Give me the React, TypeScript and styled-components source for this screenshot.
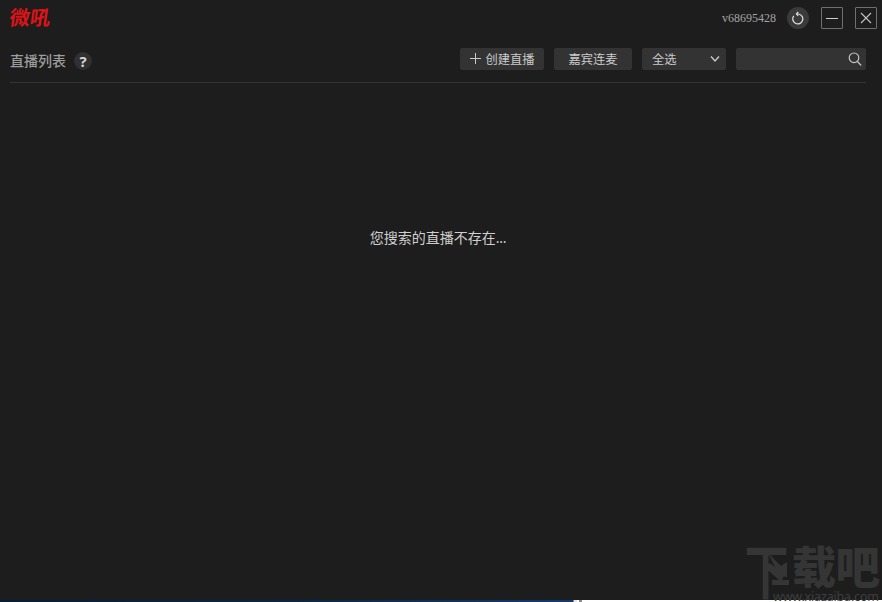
import React from 'react';
import styled, { createGlobalStyle } from 'styled-components';

const GlobalStyle = createGlobalStyle`
  * { box-sizing: border-box; }
  body { margin: 0; background: #1d1d1d; overflow: hidden; }
`;

const Window = styled.div`
  position: relative;
  display: flex;
  flex-direction: column;
  width: 882px;
  height: 602px;
  overflow: hidden;
  background: #1d1d1d;
  color: #c8c8c8;
  font-family: 'Noto Sans CJK SC', sans-serif;
`;

const TitleBar = styled.header`
  display: flex;
  align-items: center;
  justify-content: space-between;
  height: 36px;
  padding: 0 5px 0 10px;
`;

const Brand = styled.svg`
  display: block;
  width: 42px;
  height: 24px;
  overflow: visible;
`;

const WindowTools = styled.div`
  display: flex;
  align-items: center;
`;

const Version = styled.span`
  margin-right: 11px;
  font: 12px/16px 'Liberation Serif', serif;
  color: #a4a4a4;
`;

const RefreshButton = styled.button`
  display: grid;
  place-items: center;
  width: 22px;
  height: 22px;
  margin-right: 12px;
  padding: 0;
  border: 0;
  border-radius: 50%;
  background: #3a3a3a;
`;

const FrameButton = styled.button`
  display: grid;
  place-items: center;
  width: 22px;
  height: 22px;
  padding: 0;
  border: 1px solid #6f6f6f;
  border-radius: 1px;
  background: transparent;
  & + & { margin-left: 12px; }
`;

const Toolbar = styled.div`
  display: flex;
  justify-content: space-between;
  height: 47px;
  margin: 0 16px 0 10px;
  padding-top: 12px;
  border-bottom: 1px solid #343434;
`;

const Heading = styled.div`
  display: flex;
  align-items: center;
  gap: 8px;
  height: 25px;
  font-size: 14px;
  font-weight: 500;
  color: #9c9c9c;
`;

const HeadingText = styled.span`
  height: 24px;
  line-height: 22px;
`;

const Help = styled.span`
  width: 18px;
  height: 18px;
  border-radius: 50%;
  background: #303030;
  color: #d4d4d4;
  font: bold 15px/18px 'Noto Sans', sans-serif;
  text-align: center;
`;

const Actions = styled.div`
  display: flex;
  gap: 10px;
`;

const Control = styled.button<{ $width: number; $align?: string }>`
  display: flex;
  align-items: center;
  justify-content: ${p => p.$align ?? 'center'};
  width: ${p => p.$width}px;
  height: 22px;
  padding: 0 ${p => (p.$align ? 5 : 9)}px 0 ${p => (p.$align ? 10 : 9)}px;
  border: 0;
  border-radius: 2px;
  background: #333;
  color: #cbcbcb;
  font: 12.25px/22px 'Noto Sans CJK SC', sans-serif;
  white-space: nowrap;
`;

const PlusIcon = styled.svg`
  margin: 0 4px 1px -1px;
`;

const SearchBox = styled.div`
  display: flex;
  align-items: center;
  justify-content: flex-end;
  width: 130px;
  height: 22px;
  padding: 0 4px 1px 0;
  border-radius: 2px;
  background: #333;
`;

const Content = styled.main`
  flex: 1;
  padding-top: 144px;
  padding-right: 6px;
  text-align: center;
  font-size: 14px;
  line-height: 20px;
  color: #cfcfcf;
`;

const Message = styled.p`
  margin: 0;
`;

const Dots = styled.span`
  font-family: 'Noto Sans', sans-serif;
  letter-spacing: -0.3px;
`;

const Watermark = styled.svg`
  position: absolute;
  left: 742px;
  top: 540px;
  overflow: visible;
`;

const Desktop = styled.footer`
  display: flex;
  height: 2px;
  background: #fff;
`;

const DesktopBlue = styled.div`
  width: 573px;
  background: linear-gradient(90deg, #061d38, #0a2545 50%, #123b6c);
`;

const DesktopEdge = styled.div`
  width: 9px;
  background: linear-gradient(90deg, #888 1px, #e8e8ec 1px 4px, #fff 4px 6px, #8c8c8c 6px);
`;

export default function App() {
  return (
    <Window>
      <GlobalStyle />
      <TitleBar>
        <Brand viewBox="0 0 42 24">
          <text
            transform="translate(-1.5 18.8) skewX(-8)"
            fontFamily="Noto Sans CJK SC"
            fontWeight="700"
            fontSize="20"
            textLength="41"
            lengthAdjust="spacingAndGlyphs"
            fill="#dc1418"
          >微吼</text>
        </Brand>
        <WindowTools>
          <Version>v68695428</Version>
          <RefreshButton aria-label="刷新">
            <svg width="14" height="14" viewBox="0 0 14 14" fill="none" stroke="#e2e2e2" strokeWidth="1.2">
              <path d="M2.8 4.9A5 5 0 1 0 7.6 3H6" />
              <path d="M7.2 1 5.4 3 7.2 4.8" />
            </svg>
          </RefreshButton>
          <FrameButton aria-label="最小化">
            <svg width="14" height="14"><path d="M1 7.5h12" stroke="#d0d0d0" /></svg>
          </FrameButton>
          <FrameButton aria-label="关闭">
            <svg width="12" height="12"><path d="m1 1 10 10M11 1 1 11" stroke="#c4c4c4" strokeWidth="1.1" /></svg>
          </FrameButton>
        </WindowTools>
      </TitleBar>

      <Toolbar>
        <Heading><HeadingText>直播列表</HeadingText><Help>?</Help></Heading>
        <Actions>
          <Control $width={84}>
            <PlusIcon width="13" height="13"><path d="M1 6.5h11M6.5 1v11" stroke="#c9c9c9" /></PlusIcon>
            创建直播
          </Control>
          <Control $width={78}>嘉宾连麦</Control>
          <Control $width={84} $align="space-between">
            全选
            <svg width="12" height="8" fill="none"><path d="m2 1.5 4 4.5 4-4.5" stroke="#c9c9c9" strokeWidth="1.4" /></svg>
          </Control>
          <SearchBox>
            <svg width="14" height="14" fill="none" stroke="#c4c4c4" strokeWidth="1.2">
              <circle cx="6" cy="5.8" r="4.8" />
              <path d="m9.4 9.5 3.8 4" />
            </svg>
          </SearchBox>
        </Actions>
      </Toolbar>

      <Content>
        <Message>您搜索的直播不存在<Dots>...</Dots></Message>
      </Content>

      <Desktop>
        <DesktopBlue />
        <DesktopEdge />
      </Desktop>
      <Watermark width="140" height="62" viewBox="0 0 140 62" fill="#353535">
        <g fontFamily="Noto Sans CJK SC" fontWeight="900">
          <text transform="translate(2.5 54) scale(.98 1.32)" fontSize="45" fontWeight="700">下</text>
          <text transform="translate(50 44)" fontSize="44">载</text>
          <text transform="translate(93.5 44)" fontSize="44.5">吧</text>
        </g>
        <path d="M26 13 39 26 45 22v15l-15-2 5-4Z" />
        <path d="M30 40h17v5H30Z" />
        <text x="31" y="60.5" fontFamily="Noto Sans" fontSize="12.5" textLength="106" fill="#3e3e3e">www.xiazaiba.com</text>
      </Watermark>
    </Window>
  );
}
